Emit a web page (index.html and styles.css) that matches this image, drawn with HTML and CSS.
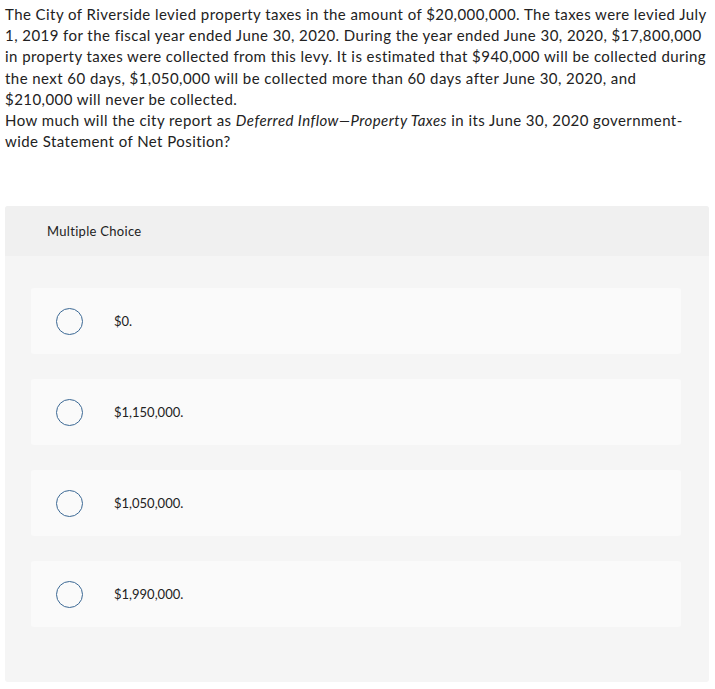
FILE: index.html
```html
<!DOCTYPE html>
<html>
<head>
<meta charset="utf-8">
<link rel="stylesheet" href="styles.css">
</head>
<body>
<div class="page">
  <div class="prompt">
    <p>The City of Riverside levied property taxes in the amount of $20,000,000. The taxes were levied July 1, 2019 for the fiscal year ended June 30, 2020. During the year ended June 30, 2020, $17,800,000 in property taxes were collected from this levy. It is estimated that $940,000 will be collected during the next 60 days, $1,050,000 will be collected more than 60 days after June 30, 2020, and $210,000&nbsp;will never be collected.</p>
    <p>How much will the city report as <em>Deferred Inflow—Property Taxes</em> in its June 30, 2020 government-wide Statement of Net Position?</p>
  </div>
  <div class="mc">
    <div class="mc-head">Multiple Choice</div>
    <div class="mc-body">
      <div class="option"><span class="radio"></span><span class="label">$0.</span></div>
      <div class="option"><span class="radio"></span><span class="label">$1,150,000.</span></div>
      <div class="option"><span class="radio"></span><span class="label">$1,050,000.</span></div>
      <div class="option"><span class="radio"></span><span class="label">$1,990,000.</span></div>
    </div>
  </div>
</div>
</body>
</html>
```
FILE: styles.css
```css
html, body { margin: 0; padding: 0; background: #fff; }
body { font-family: Lato, "Open Sans", sans-serif; color: #222; }
.page { padding: 4px 6px 0 5px; }
.prompt { font-size: 15px; line-height: 21.2px; letter-spacing: 0.44px; }
.prompt p { margin: 0; }
.mc { margin-top: 54px; border-radius: 3px; overflow: hidden; background: #f5f5f5; }
.mc-head { height: 50px; background: #f0f0f0; font-size: 13px; letter-spacing: 0.3px; display: flex; align-items: center; padding-left: 42px; }
.mc-body { padding: 32px 28px 55px 26px; display: flex; flex-direction: column; gap: 25px; }
.option { height: 66px; background: #fafafa; border-radius: 3px; display: flex; align-items: center; }
.radio { width: 25px; height: 25px; border: 1.5px solid #3b6894; border-radius: 50%; margin-left: 25px; flex: none; }
.label { margin-left: 31px; font-size: 13px; }
```
